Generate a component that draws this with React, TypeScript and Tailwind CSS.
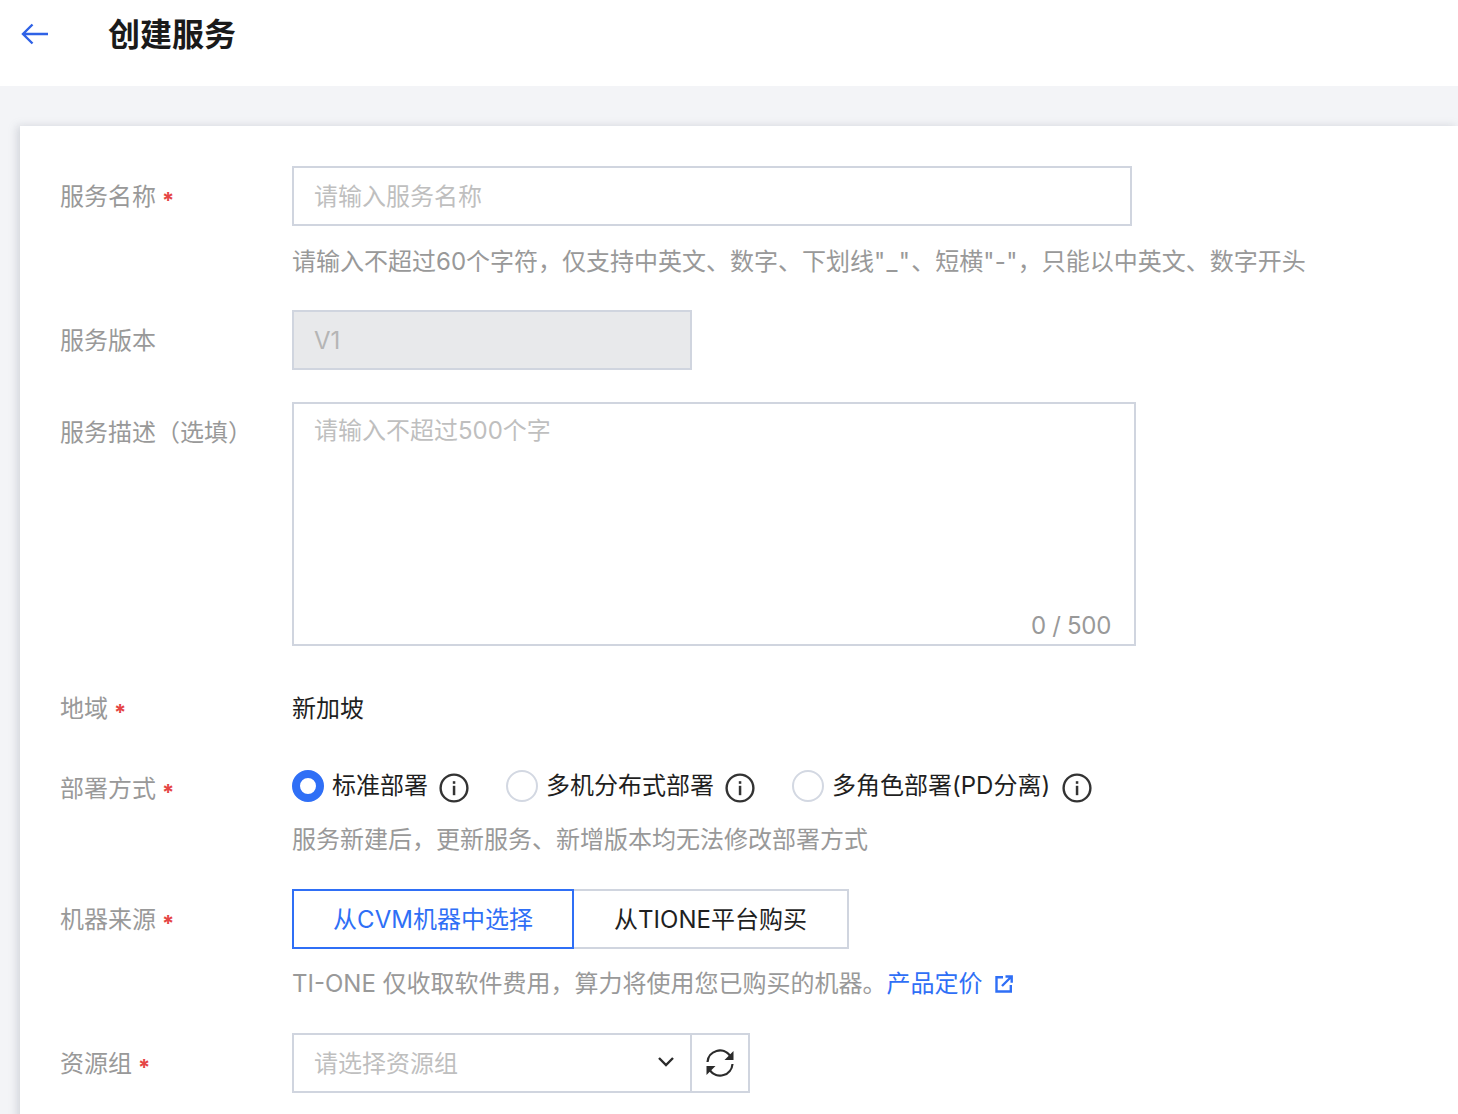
import React from "react";

const FONT = "font-['Inter','Noto_Sans_CJK_SC',sans-serif]";

function Req() {
  return <span className="ml-[6px] inline-block translate-y-[3px] text-[22px] font-bold leading-none text-[#e54545]">*</span>;
}

function Label({ text, req }: { text: string; req?: boolean }) {
  return (
    <div className="w-[232px] shrink-0 h-[60px] leading-[62px] text-[24px] text-[#999999] whitespace-nowrap">
      {text}
      {req && <Req />}
    </div>
  );
}

function Help({ children, mt }: { children: React.ReactNode; mt: string }) {
  return <div className={`${mt} h-[36px] leading-[37px] text-[24px] text-[#999999] whitespace-nowrap`}>{children}</div>;
}

function InfoIcon() {
  return (
    <svg width="30" height="30" viewBox="0 0 30 30" fill="none" className="shrink-0 mt-[3px]">
      <circle cx="15" cy="15" r="13.4" stroke="#333333" strokeWidth="2.4" />
      <rect x="13.8" y="8.2" width="2.5" height="2.6" fill="#333333" />
      <rect x="13.8" y="12.8" width="2.5" height="9.4" fill="#333333" />
    </svg>
  );
}

function Radio({ checked, text }: { checked?: boolean; text: string }) {
  return (
    <div className="flex items-center">
      {checked ? (
        <span className="w-[32px] h-[32px] rounded-full border-[8px] border-[#2f6ff6] bg-white shrink-0" />
      ) : (
        <span className="w-[32px] h-[32px] rounded-full border-2 border-[#d3d8e2] bg-white shrink-0" />
      )}
      <span className="ml-[8px] text-[24px] leading-[36px] text-[#1f1f1f] whitespace-nowrap">{text}</span>
    </div>
  );
}

export default function App() {
  return (
    <div className={`${FONT} w-[1458px] h-[1114px] overflow-hidden bg-[#f3f4f7]`} lang="zh-CN">
      <header className="h-[86px] bg-white flex items-start">
        <svg width="28" height="24" viewBox="0 0 28 24" fill="none" className="ml-[21px] mt-[22px]">
          <path d="M27 12H2.5M11.5 2.5 2 12l9.5 9.5" stroke="#2f62e6" strokeWidth="2.4" />
        </svg>
        <h1 className="ml-[59px] mt-[14px] text-[32px] leading-[42px] font-bold text-[#1a1a1a]">创建服务</h1>
      </header>

      <main className="ml-[20px] mt-[40px] h-[1000px] bg-white pl-[40px] pt-[40px] shadow-[-3px_0_8px_rgba(130,135,150,0.28)]">
        <div className="flex">
          <Label text="服务名称" req />
          <div>
            <div className="w-[840px] h-[60px] border-2 border-[#d0d5df] px-[20px] leading-[58px] text-[24px] text-[#bfbfbf]">请输入服务名称</div>
            <Help mt="mt-[17px]">
              请输入不超过60个字符，仅支持中英文、数字、下划线<span className="tracking-[1.33px]">"_"</span>、短横<span className="tracking-[0.33px]">"-"</span>，只能以中英文、数字开头
            </Help>
          </div>
        </div>

        <div className="flex mt-[31px]">
          <Label text="服务版本" />
          <div className="w-[400px] h-[60px] border-2 border-[#d0d5df] bg-[#e8e9eb] px-[20px] leading-[58px] text-[24px] text-[#b5b5b5]">V1</div>
        </div>

        <div className="flex mt-[32px]">
          <Label text="服务描述（选填）" />
          <div className="relative w-[844px] h-[244px] border-2 border-[#d0d5df] px-[20px] pt-[9px] text-[24px] leading-[36px] text-[#bfbfbf]">
            请输入不超过500个字
            <span className="absolute right-[23px] bottom-[0px] leading-[36px] tracking-[-0.3px] text-[#999999]">0 / 500</span>
          </div>
        </div>

        <div className="flex mt-[32px]">
          <Label text="地域" req />
          <div className="h-[60px] leading-[62px] text-[24px] text-[#1f1f1f]">新加坡</div>
        </div>

        <div className="flex mt-[20px]">
          <Label text="部署方式" req />
          <div className="pt-[12px]">
            <div className="flex items-center h-[32px]">
              <Radio checked text="标准部署" />
              <span className="ml-[11px]"><InfoIcon /></span>
              <span className="ml-[37px]"><Radio text="多机分布式部署" /></span>
              <span className="ml-[11px]"><InfoIcon /></span>
              <span className="ml-[37px]"><Radio text="多角色部署(PD分离)" /></span>
              <span className="ml-[12px]"><InfoIcon /></span>
            </div>
            <Help mt="mt-[19px]">服务新建后，更新服务、新增版本均无法修改部署方式</Help>
          </div>
        </div>

        <div className="flex mt-[32px]">
          <Label text="机器来源" req />
          <div>
            <div className="flex h-[60px] text-[24px]">
              <div className="w-[282px] border-2 border-[#2f6ff6] text-[#2f6ff6] flex items-center justify-center pt-[1px]">从CVM机器中选择</div>
              <div className="w-[275px] border-2 border-l-0 border-[#d0d5df] text-[#1f1f1f] flex items-center justify-center pt-[1px]">从TIONE平台购买</div>
            </div>
            <Help mt="mt-[16px]">
              TI-ONE 仅收取软件费用，算力将使用您已购买的机器。
              <span className="text-[#2f6ff6]">产品定价</span>
              <svg width="18" height="18" viewBox="0 0 18 18" fill="none" className="inline-block ml-[12px] align-[-1px]">
                <path d="M8 2.2H1.5v14.3h14.3V10" stroke="#2f6ff6" strokeWidth="2.4" />
                <path d="M7 11 15.5 2.5M10.5 1.5h6.2v6.2" stroke="#2f6ff6" strokeWidth="2.4" />
              </svg>
            </Help>
          </div>
        </div>

        <div className="flex mt-[32px]">
          <Label text="资源组" req />
          <div className="flex h-[60px]">
            <div className="w-[400px] border-2 border-[#d0d5df] pl-[20px] pr-[15px] flex items-center justify-between text-[24px] text-[#bfbfbf]">
              <span className="pt-[1px]">请选择资源组</span>
              <svg width="18" height="12" viewBox="0 0 18 12" fill="none" className="-translate-y-[1px]">
                <path d="M2 2l7 7 7-7" stroke="#2b2b2b" strokeWidth="2.4" />
              </svg>
            </div>
            <div className="w-[58px] border-2 border-l-0 border-[#d0d5df] flex items-center justify-center">
              <svg width="30" height="30" viewBox="0 0 30 30" fill="none">
                <path d="M2.5 14A12.5 12.5 0 0 1 25 7.5" stroke="#2b2b2b" strokeWidth="2.2" />
                <path d="M27.5 16A12.5 12.5 0 0 1 5 22.5" stroke="#2b2b2b" strokeWidth="2.2" />
                <path d="M28.5 3v9h-9Z" fill="#2b2b2b" />
                <path d="M1.5 27v-9h9Z" fill="#2b2b2b" />
              </svg>
            </div>
          </div>
        </div>
      </main>
    </div>
  );
}
